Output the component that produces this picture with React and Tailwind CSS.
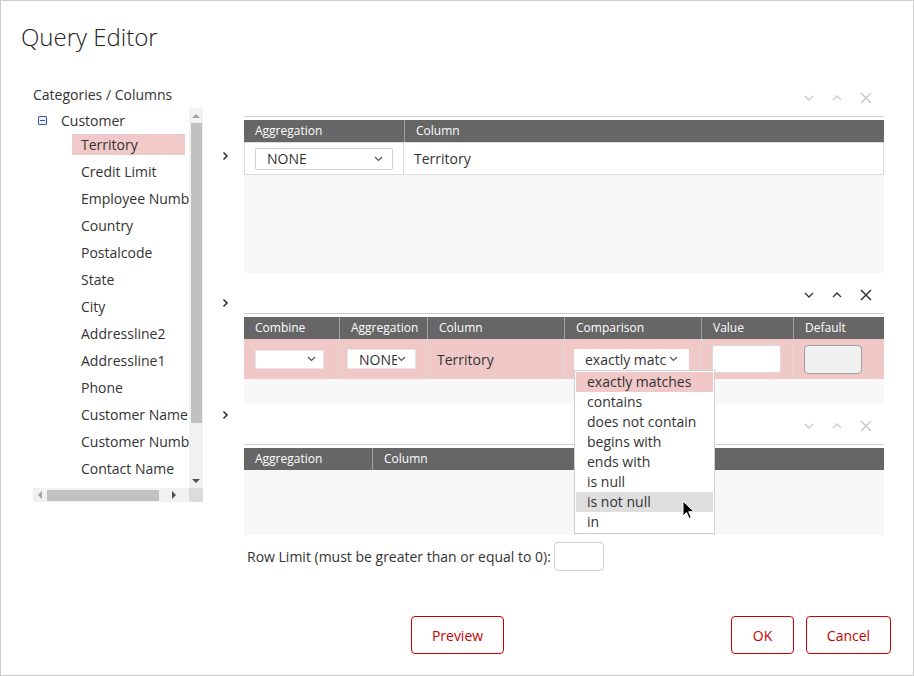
import React from "react";

const items = [
  "Territory",
  "Credit Limit",
  "Employee Number",
  "Country",
  "Postalcode",
  "State",
  "City",
  "Addressline2",
  "Addressline1",
  "Phone",
  "Customer Name",
  "Customer Number",
  "Contact Name",
];

const options = [
  "exactly matches",
  "contains",
  "does not contain",
  "begins with",
  "ends with",
  "is null",
  "is not null",
  "in",
];

const Caret = ({ className = "" }) => (
  <svg width="9" height="6" viewBox="0 0 9 6" className={className}>
    <path d="M1 1l3.5 3.5L8 1" fill="none" stroke="currentColor" strokeWidth="1.2" />
  </svg>
);

const RightChevron = () => (
  <svg width="7" height="10" viewBox="0 0 7 10" className="text-[#333]">
    <path d="M1.5 1.5L5 5l-3.5 3.5" fill="none" stroke="currentColor" strokeWidth="1.6" />
  </svg>
);

const Toolbar = ({ active }) => {
  const color = active ? "text-[#333]" : "text-[#c8c8c8]";
  return (
    <div className={`h-[28px] flex items-center justify-end gap-[18px] pr-[12px] ${color}`}>
      <svg width="10" height="6" viewBox="0 0 10 6">
        <path d="M1 1l4 4 4-4" fill="none" stroke="currentColor" strokeWidth="1.3" />
      </svg>
      <svg width="10" height="6" viewBox="0 0 10 6">
        <path d="M1 5l4-4 4 4" fill="none" stroke="currentColor" strokeWidth="1.3" />
      </svg>
      <svg width="12" height="12" viewBox="0 0 12 12">
        <path d="M1 1l10 10M11 1L1 11" fill="none" stroke="currentColor" strokeWidth="1.5" />
      </svg>
    </div>
  );
};

const Header = ({ cols }) => (
  <div className="flex h-[22px] bg-[#666] text-white text-[12px] leading-[22px]">
    {cols.map(([label, w], i) => (
      <div
        key={label}
        className={`pl-[11px] ${w} ${i > 0 ? "border-l border-[#a0a0a0]" : ""}`}
      >
        {label}
      </div>
    ))}
  </div>
);

const Section = ({ chevronTop, active, children }) => (
  <div className="flex">
    <div className="w-[41px] flex justify-start pl-[19px]">
      <div className={chevronTop}>
        <RightChevron />
      </div>
    </div>
    <div className="w-[640px]">
      <Toolbar active={active} />
      <div className="mt-[4px] border-t border-[#cfcfcf] pt-[3px]">{children}</div>
    </div>
  </div>
);

const Btn = ({ children, w }) => (
  <button
    className={`${w} h-[38px] rounded-[4px] border border-[#c80000] text-[#c80000] text-[14px] bg-white`}
  >
    {children}
  </button>
);

export default function App() {
  return (
    <div className="relative w-[914px] h-[676px] border border-[#cccccc] bg-white font-['Open_Sans',sans-serif] text-[#333] flex flex-col overflow-hidden">
      <div className="h-[83px] pl-[20px] pt-[20px]">
        <h1 className="text-[24px] leading-[32px] font-light text-[#222]">Query Editor</h1>
      </div>

      <div className="flex pl-[32px]">
        {/* tree */}
        <div className="w-[170px]">
          <div className="mt-[1px] h-[20px] text-[14px] leading-[20px]">Categories / Columns</div>
          <div className="mt-[3px] h-[394px] flex flex-col">
            <div className="flex h-[380px]">
              <div className="w-[156px] overflow-hidden text-[14px]">
                <div className="h-[24px] flex items-center">
                  <div className="ml-[5px] w-[9px] h-[9px] border border-[#3a4fa8] bg-[#eef0fa] rounded-[1px] flex items-center justify-center">
                    <div className="w-[5px] h-[1px] bg-[#3a4fa8]" />
                  </div>
                  <span className="ml-[14px]">Customer</span>
                </div>
                <div className="mt-[2px] flex flex-col gap-[6px] pl-[39px]">
                  {items.map((t, i) => (
                    <div
                      key={t}
                      className={`w-[113px] h-[21px] leading-[21px] pl-[9px] whitespace-nowrap ${
                        i === 0 ? "bg-[#f2c9c9]" : ""
                      }`}
                    >
                      {t}
                    </div>
                  ))}
                </div>
              </div>
              <div className="w-[14px] bg-[#f1f1f1] flex flex-col items-center">
                <div className="h-[15px] flex items-center justify-center">
                  <div className="w-0 h-0 border-l-[4px] border-r-[4px] border-b-[4px] border-l-transparent border-r-transparent border-b-[#a3a3a3]" />
                </div>
                <div className="w-[11px] h-[300px] bg-[#c1c1c1]" />
                <div className="flex-1" />
                <div className="h-[15px] flex items-center justify-center">
                  <div className="w-0 h-0 border-l-[4px] border-r-[4px] border-t-[4px] border-l-transparent border-r-transparent border-t-[#505050]" />
                </div>
              </div>
            </div>
            <div className="flex h-[14px]">
              <div className="w-[156px] bg-[#f1f1f1] flex items-center">
                <div className="w-[14px] flex justify-center">
                  <div className="w-0 h-0 border-t-[4px] border-b-[4px] border-r-[4px] border-t-transparent border-b-transparent border-r-[#a3a3a3]" />
                </div>
                <div className="w-[112px] h-[11px] bg-[#c1c1c1]" />
                <div className="flex-1 flex justify-center">
                  <div className="w-0 h-0 border-t-[4px] border-b-[4px] border-l-[4px] border-t-transparent border-b-transparent border-l-[#505050]" />
                </div>
              </div>
              <div className="w-[14px] bg-[#dcdcdc]" />
            </div>
          </div>
        </div>

        {/* panels */}
        <div className="flex flex-col gap-[8px]">
          <Section chevronTop="mt-[67px]" active={false}>
            <Header cols={[["Aggregation", "w-[160px]"], ["Column", "flex-1"]]} />
            <div className="flex h-[33px] border border-[#dcdcdc] bg-white text-[14px]">
              <div className="w-[159px] border-r border-[#dcdcdc] flex items-center pl-[10px]">
                <div className="w-[138px] h-[22px] border border-[#cfcfcf] rounded-[2px] flex items-center justify-between pl-[11px] pr-[9px]">
                  <span>NONE</span>
                  <Caret className="text-[#555]" />
                </div>
              </div>
              <div className="flex items-center pl-[10px]">Territory</div>
            </div>
            <div className="h-[98px] bg-[#f7f7f7]" />
          </Section>

          <Section chevronTop="mt-[17px]" active>
            <Header
              cols={[
                ["Combine", "w-[95px]"],
                ["Aggregation", "w-[88px]"],
                ["Column", "w-[137px]"],
                ["Comparison", "w-[137px]"],
                ["Value", "w-[92px]"],
                ["Default", "flex-1"],
              ]}
            />
            <div className="flex h-[40px] bg-[#f0c8c8] text-[14px]">
              <div className="w-[95px] border-r border-[#e0d6d6] flex items-center pl-[11px]">
                <div className="w-[69px] h-[19px] bg-white border border-[#e6e6e6] flex items-center justify-end pr-[7px]">
                  <Caret className="text-[#555]" />
                </div>
              </div>
              <div className="w-[88px] border-r border-[#e0d6d6] flex items-center pl-[8px]">
                <div className="w-[69px] h-[20px] bg-white border border-[#e6e6e6] flex items-center pl-[11px] overflow-hidden relative">
                  <span className="whitespace-nowrap">NONE</span>
                  <div className="absolute right-0 top-0 h-full w-[18px] bg-white flex items-center">
                    <Caret className="text-[#555]" />
                  </div>
                </div>
              </div>
              <div className="w-[137px] border-r border-[#e0d6d6] flex items-center pl-[10px]">Territory</div>
              <div className="w-[137px] border-r border-[#e0d6d6] flex items-center pl-[10px]">
                <div className="w-[115px] h-[21px] bg-white flex items-center pl-[11px] overflow-hidden relative">
                  <span className="whitespace-nowrap">exactly matches</span>
                  <div className="absolute right-0 top-0 h-full w-[22px] bg-white flex items-center pl-[2px]">
                    <Caret className="text-[#555]" />
                  </div>
                </div>
              </div>
              <div className="w-[92px] border-r border-[#e0d6d6] flex items-center pl-[11px]">
                <div className="w-[69px] h-[28px] bg-white border border-[#dcdcdc] rounded-[3px]" />
              </div>
              <div className="flex-1 flex items-center pl-[11px]">
                <div className="w-[58px] h-[29px] bg-[#f0f0f0] border border-[#a0a0a0] rounded-[4px]" />
              </div>
            </div>
            <div className="h-[25px] bg-[#f7f7f7]" />
          </Section>

          <Section chevronTop="mt-[-2px]" active={false}>
            <Header cols={[["Aggregation", "w-[128px]"], ["Column", "flex-1"]]} />
            <div className="h-[65px] bg-[#f7f7f7]" />
          </Section>

          <div className="flex items-center ml-[44px] mt-[-1px] text-[14px]">
            <span>Row Limit (must be greater than or equal to 0):</span>
            <div className="ml-[3px] w-[50px] h-[29px] border border-[#cfcfcf] rounded-[4px] bg-white" />
          </div>
        </div>
      </div>

      {/* footer */}
      <div className="mt-auto pb-[21px] flex items-center pl-[410px] pr-[22px]">
        <Btn w="w-[93px]">Preview</Btn>
        <div className="flex-1 flex justify-end gap-[12px]">
          <Btn w="w-[63px]">OK</Btn>
          <Btn w="w-[85px]">Cancel</Btn>
        </div>
      </div>

      {/* comparison dropdown */}
      <div className="absolute left-[573px] top-[369px] w-[141px] bg-white border border-[#cfcfcf] text-[14px] pt-[1px] px-[1px] pb-[1px]">
        {options.map((o, i) => (
          <div
            key={o}
            className={`h-[20px] leading-[20px] pl-[11px] ${
              i === 0 ? "bg-[#f0c8c8]" : i === 6 ? "bg-[#dedede]" : ""
            }`}
          >
            {o}
          </div>
        ))}
      </div>

      {/* mouse cursor */}
      <svg
        className="absolute left-[681px] top-[499px]"
        width="13"
        height="20"
        viewBox="0 0 13 20"
      >
        <path
          d="M1 1v15l3.5-3.5 2.5 6 2.2-1-2.5-5.8H12z"
          fill="#000"
          stroke="#fff"
          strokeWidth="1"
        />
      </svg>
    </div>
  );
}
